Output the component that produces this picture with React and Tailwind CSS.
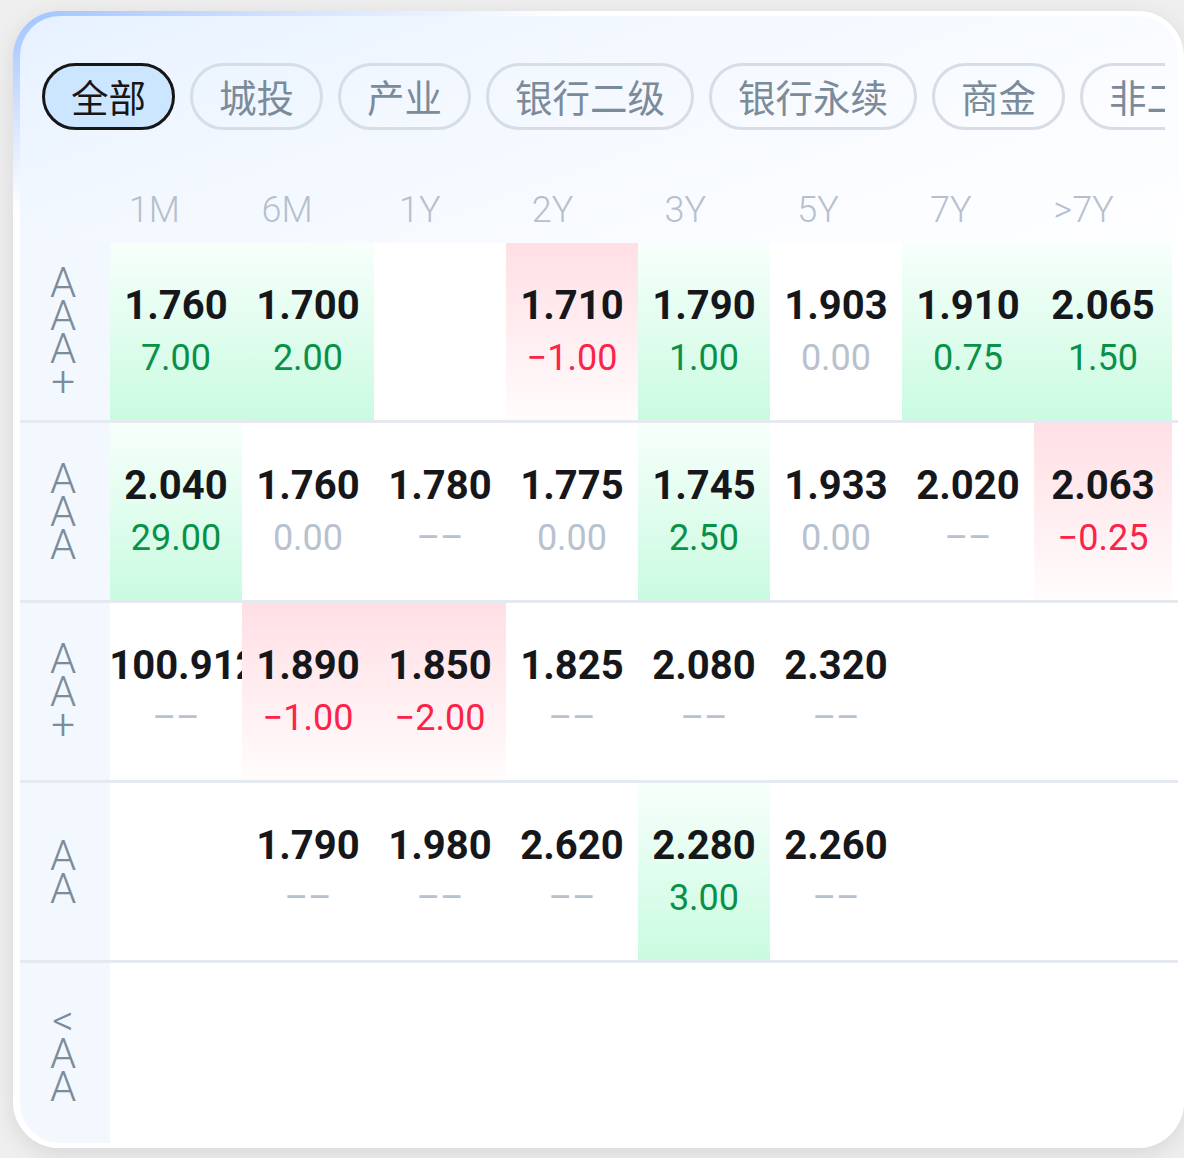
const TABS = ['全部', '城投', '产业', '银行二级', '银行永续', '商金', '非二级']
const COLS = ['1M', '6M', '1Y', '2Y', '3Y', '5Y', '7Y', '>7Y']

const up = (v, d) => ({ v, d, t: 'up' })
const dn = (v, d) => ({ v, d, t: 'down' })
const zero = (v) => ({ v, d: '0.00', t: 'flat' })
const na = (v) => ({ v, d: '––', t: 'flat' })

const ROWS = [
  {
    label: 'AAA+',
    cells: [up('1.760', '7.00'), up('1.700', '2.00'), null, dn('1.710', '−1.00'), up('1.790', '1.00'), zero('1.903'), up('1.910', '0.75'), up('2.065', '1.50')],
  },
  {
    label: 'AAA',
    cells: [up('2.040', '29.00'), zero('1.760'), na('1.780'), zero('1.775'), up('1.745', '2.50'), zero('1.933'), na('2.020'), dn('2.063', '−0.25')],
  },
  {
    label: 'AA+',
    cells: [na('-100.912'), dn('1.890', '−1.00'), dn('1.850', '−2.00'), na('1.825'), na('2.080'), na('2.320'), null, null],
  },
  {
    label: 'AA',
    cells: [null, na('1.790'), na('1.980'), na('2.620'), up('2.280', '3.00'), na('2.260'), null, null],
  },
  { label: '<AA', cells: [null, null, null, null, null, null, null, null] },
]

const font = { fontFamily: 'Roboto, "Noto Sans CJK SC", sans-serif' }

function Tab({ name, active }) {
  return (
    <div
      className={
        active
          ? 'shrink-0 h-[67px] px-[26px] flex items-center rounded-full border-[3px] border-[#161616] bg-[#cde6ff] text-[#161616] text-[37.5px]'
          : 'shrink-0 h-[67px] px-[26px] flex items-center rounded-full border-[3px] border-[#d6dde6] text-[#7b8b9a] text-[37.5px]'
      }
      style={{ fontFamily: '"Noto Sans CJK SC", sans-serif' }}
    >
      {name}
    </div>
  )
}

function Cell({ cell }) {
  if (!cell) return <div />
  const bg =
    cell.t === 'up'
      ? 'bg-gradient-to-b from-[#f7fffb] to-[#c9fbe1]'
      : cell.t === 'down'
        ? 'bg-gradient-to-b from-[#ffdfe5] to-[#fffcfc]'
        : ''
  const sub = cell.t === 'up' ? 'text-[#0a9148]' : cell.t === 'down' ? 'text-[#fb2448]' : 'text-[#b8c1ce]'
  return (
    <div className={`flex flex-col items-center justify-center overflow-hidden whitespace-nowrap ${bg}`}>
      <div className="text-[40px] leading-[52px] font-bold text-[#16171b]">{cell.v}</div>
      <div className={`text-[36px] leading-[52px] ${sub}`}>{cell.d}</div>
    </div>
  )
}

function Row({ row, last }) {
  return (
    <div className={`flex h-[180px] ${last ? '' : 'border-b-[3px] border-[#e5eaf0]'}`}>
      <div className="w-[90px] shrink-0 bg-[#f3f8fe] pr-[4px] flex flex-col items-center justify-center text-[42px] leading-[33px] font-light text-[#7b8c9b]">
        {row.label.split('').map((ch, i) => (
          <span key={i}>{ch}</span>
        ))}
      </div>
      <div className="w-[1062px] grid grid-cols-[repeat(7,132px)_1fr] bg-white">
        {row.cells.map((c, i) => (
          <Cell key={i} cell={c} />
        ))}
      </div>
      <div className="flex-1 bg-white" />
    </div>
  )
}

export default function App() {
  return (
    <div className="w-[1184px] h-[1158px] bg-[#efefef] pl-[13px] pt-[11px] overflow-hidden" style={font}>
      <div
        className="w-[1171px] h-[1137px] rounded-[46px] pl-[7px] pr-[6px] pt-[5px] pb-[5px] shadow-[0_6px_24px_rgba(0,0,0,0.10)]"
        style={{ background: 'linear-gradient(160deg, #9fc2ff 0%, #cfe0ff 6%, #ffffff 13%)' }}
      >
        <div
          className="h-full rounded-[40px] overflow-hidden flex flex-col"
          style={{ background: 'linear-gradient(160deg, #e6f1ff 0%, #f3f8ff 15%, #fafcff 30%, #ffffff 45%)' }}
        >
          <div className="mt-[47px] pl-[22px] pr-[13px]">
            <div className="flex gap-[15px] overflow-hidden">
              {TABS.map((t, i) => (
                <Tab key={t} name={t} active={i === 0} />
              ))}
            </div>
          </div>

          <div className="mt-[46px] h-[67px] pl-[68px] flex items-center">
            <div className="w-[1062px] grid grid-cols-8">
              {COLS.map((c) => (
                <div key={c} className="text-center text-[36px] font-light text-[#b6c0cd]">
                  {c}
                </div>
              ))}
            </div>
          </div>

          <div className="flex flex-col">
            {ROWS.map((r, i) => (
              <Row key={r.label} row={r} last={i === ROWS.length - 1} />
            ))}
          </div>
        </div>
      </div>
    </div>
  )
}
